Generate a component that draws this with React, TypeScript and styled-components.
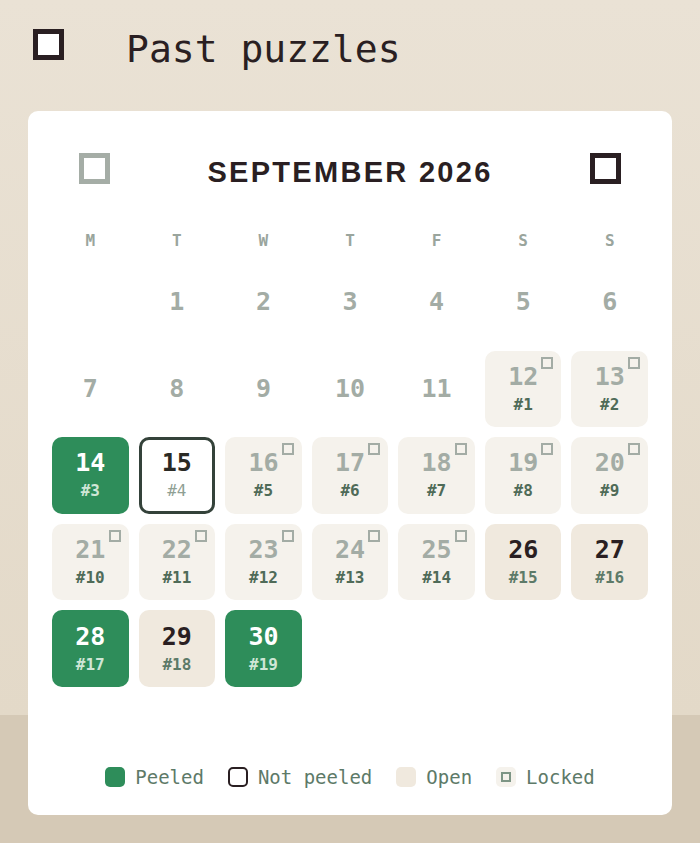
import React from "react";
import styled, { createGlobalStyle } from "styled-components";

type Status = "none" | "locked" | "peeled" | "pending" | "open";

interface Day {
  day: number;
  status: Status;
  puzzle?: number;
}

const GlobalStyle = createGlobalStyle`
  html {
    background: #d5c9b6;
  }
  body {
    margin: 0;
    font-family: "DejaVu Sans Mono", monospace;
  }
`;

const Page = styled.div`
  min-height: 100vh;
  padding: 20px 28px 28px;
  box-sizing: border-box;
  background: linear-gradient(180deg, #eae2d5 0%, #e3d9c8 100%) top / 100% 715px no-repeat;
`;

const TopBar = styled.header`
  display: flex;
  align-items: center;
  gap: 62px;
  height: 48px;
  padding-left: 5px;
`;

const Square = styled.span<{ $tone: "dark" | "muted"; $size: number; $line: number }>`
  display: block;
  width: ${(p) => p.$size}px;
  height: ${(p) => p.$size}px;
  box-sizing: border-box;
  border: ${(p) => p.$line}px solid ${(p) => (p.$tone === "dark" ? "#2a1f22" : "#a5ada6")};
  background: #fff;
`;

const PlainButton = styled.button`
  padding: 0;
  border: none;
  background: none;
  cursor: pointer;
`;

const PageTitle = styled.h1`
  margin: 0;
  padding-top: 9px;
  font-family: "DejaVu Sans Mono", monospace;
  font-weight: normal;
  font-size: 38px;
  line-height: 48px;
  color: #2a1f22;
`;

const Card = styled.section`
  margin-top: 43px;
  background: #fff;
  border-radius: 10px;
  padding: 24px 24px 28px;
`;

const MonthBar = styled.div`
  display: flex;
  align-items: center;
  justify-content: space-between;
  height: 67px;
  padding: 0 27px;
`;

const MonthTitle = styled.h2`
  margin: 8px 0 0;
  font-family: "Liberation Sans", Arial, sans-serif;
  font-weight: bold;
  font-size: 29px;
  letter-spacing: 2.3px;
  color: #2a1f22;
`;

const Grid = styled.div`
  display: grid;
  grid-template-columns: repeat(7, 1fr);
  column-gap: 10px;
`;

const WeekRow = styled(Grid)`
  margin-top: 28px;
  height: 20px;
  align-items: center;
`;

const WeekDay = styled.div`
  text-align: center;
  font-weight: bold;
  font-size: 16px;
  color: #9aa59d;
`;

const DayGrid = styled(Grid)`
  margin-top: 14px;
  row-gap: 10px;
`;

const cellBg: Record<Status, string> = {
  none: "transparent",
  locked: "#f5f2ec",
  peeled: "#2e8d5a",
  pending: "#fff",
  open: "#f0e9de",
};

const numColor: Record<Status, string> = {
  none: "#a3aca5",
  locked: "#a3aca5",
  peeled: "#fff",
  pending: "#2a2a25",
  open: "#2a1f22",
};

const labelColor: Record<Status, string> = {
  none: "#5d7a68",
  locked: "#4f6b58",
  peeled: "#cfe6d6",
  pending: "#8fa094",
  open: "#5d7a68",
};

const Cell = styled.div<{ $status: Status }>`
  position: relative;
  aspect-ratio: 1;
  box-sizing: border-box;
  border-radius: 10px;
  background: ${(p) => cellBg[p.$status]};
  border: ${(p) => (p.$status === "pending" ? "3px solid #34423a" : "none")};
  display: flex;
  flex-direction: column;
  align-items: center;
  justify-content: center;
  gap: 6px;
`;

const DayNum = styled.span<{ $status: Status }>`
  font-weight: bold;
  font-size: 25px;
  line-height: 26px;
  color: ${(p) => numColor[p.$status]};
`;

const PuzzleNo = styled.span<{ $status: Status }>`
  font-weight: ${(p) => (p.$status === "pending" ? "normal" : "bold")};
  font-size: 16px;
  line-height: 18px;
  color: ${(p) => labelColor[p.$status]};
`;

const LockMark = styled.span`
  position: absolute;
  top: 6px;
  right: 8px;
  width: 12px;
  height: 12px;
  box-sizing: border-box;
  border: 2px solid #a3aca5;
`;

const Legend = styled.div`
  margin-top: 80px;
  display: flex;
  justify-content: center;
  align-items: center;
  gap: 24px;
`;

const LegendItem = styled.div`
  display: flex;
  align-items: center;
  gap: 10px;
  font-size: 19px;
  line-height: 20px;
  color: #5d7a68;
`;

const Swatch = styled.span<{ $status: Status }>`
  display: flex;
  align-items: center;
  justify-content: center;
  width: 20px;
  height: 20px;
  box-sizing: border-box;
  border-radius: 5px;
  background: ${(p) => cellBg[p.$status]};
  border: ${(p) => (p.$status === "pending" ? "2.5px solid #2a1f22" : "none")};
`;

const SwatchLock = styled.span`
  width: 10px;
  height: 10px;
  box-sizing: border-box;
  border: 2px solid #7d9585;
`;

const weekDays = ["M", "T", "W", "T", "F", "S", "S"];

const statusFor = (d: number): Status => {
  if (d < 12) return "none";
  if (d === 14 || d === 28 || d === 30) return "peeled";
  if (d === 15) return "pending";
  if (d === 26 || d === 27 || d === 29) return "open";
  return "locked";
};

const days: Day[] = Array.from({ length: 30 }, (_, i) => {
  const day = i + 1;
  const status = statusFor(day);
  return { day, status, puzzle: day >= 12 ? day - 11 : undefined };
});

const leadingBlanks = 1;

const App: React.FC = () => (
  <>
    <GlobalStyle />
    <Page>
      <TopBar>
        <PlainButton aria-label="Back">
          <Square $tone="dark" $size={31} $line={5} />
        </PlainButton>
        <PageTitle>Past puzzles</PageTitle>
      </TopBar>

      <Card>
        <MonthBar>
          <PlainButton aria-label="Previous month">
            <Square $tone="muted" $size={31} $line={5} />
          </PlainButton>
          <MonthTitle>SEPTEMBER 2026</MonthTitle>
          <PlainButton aria-label="Next month">
            <Square $tone="dark" $size={31} $line={5} />
          </PlainButton>
        </MonthBar>

        <WeekRow>
          {weekDays.map((w, i) => (
            <WeekDay key={i}>{w}</WeekDay>
          ))}
        </WeekRow>

        <DayGrid>
          {Array.from({ length: leadingBlanks }, (_, i) => (
            <Cell key={`b${i}`} $status="none" />
          ))}
          {days.map((d) => (
            <Cell key={d.day} $status={d.status}>
              <DayNum $status={d.status}>{d.day}</DayNum>
              {d.puzzle && <PuzzleNo $status={d.status}>#{d.puzzle}</PuzzleNo>}
              {d.status === "locked" && <LockMark />}
            </Cell>
          ))}
        </DayGrid>

        <Legend>
          <LegendItem>
            <Swatch $status="peeled" />
            Peeled
          </LegendItem>
          <LegendItem>
            <Swatch $status="pending" />
            Not peeled
          </LegendItem>
          <LegendItem>
            <Swatch $status="open" />
            Open
          </LegendItem>
          <LegendItem>
            <Swatch $status="locked">
              <SwatchLock />
            </Swatch>
            Locked
          </LegendItem>
        </Legend>
      </Card>
    </Page>
  </>
);

export default App;
